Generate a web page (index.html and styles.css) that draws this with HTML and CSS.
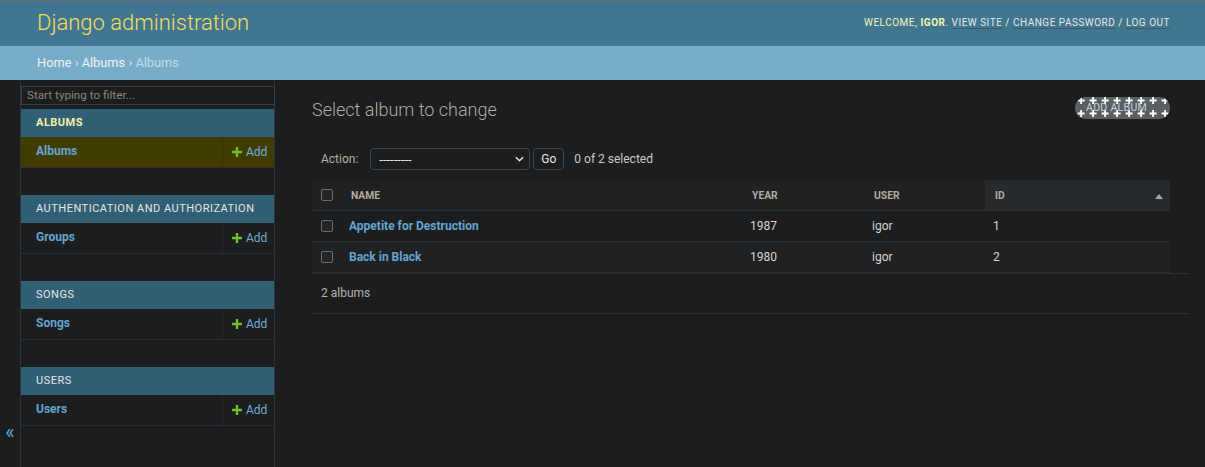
FILE: index.html
```html
<!DOCTYPE html>
<html lang="en">
<head>
<meta charset="utf-8">
<title>Select album to change | Django site admin</title>
<link rel="stylesheet" href="styles.css">
</head>
<body>
<div class="header">
  <div class="branding">Django administration</div>
  <div class="user-tools">WELCOME, <strong>IGOR</strong>. <a href="#">VIEW SITE</a> / <a href="#">CHANGE PASSWORD</a> / <a href="#">LOG OUT</a></div>
</div>
<div class="breadcrumbs"><a href="#">Home</a> <span class="sep">›</span> <a href="#">Albums</a> <span class="sep">›</span> <span class="last">Albums</span></div>
<div class="main">
  <div class="toggle"><span class="toggle-glyph">«</span></div>
  <nav class="sidebar">
    <div class="filter">Start typing to filter...</div>
    <div class="module current">
      <div class="caption">Albums</div>
      <div class="model-row"><a class="model" href="#">Albums</a><a class="add" href="#"><svg class="plus" viewBox="0 0 10 10"><path d="M3.8 0h2.4v3.8H10v2.4H6.2V10H3.8V6.2H0V3.8h3.8z"/></svg>Add</a></div>
    </div>
    <div class="module">
      <div class="caption">Authentication and Authorization</div>
      <div class="model-row"><a class="model" href="#">Groups</a><a class="add" href="#"><svg class="plus" viewBox="0 0 10 10"><path d="M3.8 0h2.4v3.8H10v2.4H6.2V10H3.8V6.2H0V3.8h3.8z"/></svg>Add</a></div>
    </div>
    <div class="module">
      <div class="caption">Songs</div>
      <div class="model-row"><a class="model" href="#">Songs</a><a class="add" href="#"><svg class="plus" viewBox="0 0 10 10"><path d="M3.8 0h2.4v3.8H10v2.4H6.2V10H3.8V6.2H0V3.8h3.8z"/></svg>Add</a></div>
    </div>
    <div class="module">
      <div class="caption">Users</div>
      <div class="model-row"><a class="model" href="#">Users</a><a class="add" href="#"><svg class="plus" viewBox="0 0 10 10"><path d="M3.8 0h2.4v3.8H10v2.4H6.2V10H3.8V6.2H0V3.8h3.8z"/></svg>Add</a></div>
    </div>
  </nav>
  <div class="content">
    <div class="content-head">
      <h1>Select album to change</h1>
      <a class="addlink" href="#">
        <svg class="addlink-bg" width="95" height="22"><defs><pattern id="pl" x="0" y="-3" width="12" height="13" patternUnits="userSpaceOnUse"><path d="M5.2 3h1.8v2.6h2.6v1.8H7V10H5.2V7.4H2.6V5.6h2.6z" fill="#ffffff"/></pattern></defs><rect width="95" height="22" fill="url(#pl)"/></svg>
        <span class="addlink-text">ADD ALBUM</span>
      </a>
    </div>
    <div class="actions">
      <span class="action-label">Action:</span>
      <div class="select"><span>---------</span><svg class="chev" viewBox="0 0 10 6"><path d="M1 1l4 4 4-4" fill="none" stroke="#e8e6e3" stroke-width="1.6"/></svg></div>
      <div class="go">Go</div>
      <span class="counter">0 of 2 selected</span>
    </div>
    <table class="results">
      <colgroup><col class="c-check"><col class="c-name"><col class="c-year"><col class="c-user"><col class="c-id"></colgroup>
      <thead>
        <tr><th class="check"><span class="cb"></span></th><th>Name</th><th>Year</th><th>User</th><th class="sorted">Id<span class="sort-arrow"></span></th></tr>
      </thead>
      <tbody>
        <tr class="row1"><td class="check"><span class="cb"></span></td><th class="name"><a href="#">Appetite for Destruction</a></th><td>1987</td><td>igor</td><td>1</td></tr>
        <tr class="row2"><td class="check"><span class="cb"></span></td><th class="name"><a href="#">Back in Black</a></th><td>1980</td><td>igor</td><td>2</td></tr>
      </tbody>
    </table>
    <div class="paginator">2 albums</div>
  </div>
</div>
</body>
</html>
```
FILE: styles.css
```css
* { box-sizing: border-box; }
html, body { margin: 0; padding: 0; }
body {
  background: #1b1d1e;
  font-family: Roboto, "Liberation Sans", sans-serif;
  font-size: 12px;
  color: #d8d4cf;
}
a { text-decoration: none; }

.header {
  display: flex;
  justify-content: space-between;
  align-items: flex-start;
  height: 46px;
  border-top: 1px solid #6e6e6e;
  background: #417690;
  padding: 0 35px 0 37px;
}
.branding {
  margin-top: 8px;
  font-size: 22px;
  line-height: 28px;
  font-weight: 300;
  color: #f5dd5d;
}
.user-tools {
  margin-top: 15px;
  font-size: 10px;
  line-height: 14px;
  letter-spacing: 0.5px;
  color: #f6f5b4;
}
.user-tools strong { font-weight: 700; }
.user-tools a {
  color: #e8e6e3;
  border-bottom: 1px solid #3d5b6b;
}

.breadcrumbs {
  height: 34px;
  background: #77adc8;
  padding: 9px 37px 0;
  font-size: 12.8px;
  line-height: 16px;
  color: #e6eef3;
}
.breadcrumbs a { color: #f2f2f2; }
.breadcrumbs .sep { color: #dbe9f1; }
.breadcrumbs .last { color: #c4dce8; }

.main {
  display: flex;
  min-height: 387px;
}
.toggle {
  flex: 0 0 21px;
  border-right: 1px solid #303335;
  padding-top: 342px;
  text-align: center;
}
.toggle-glyph {
  font-size: 20px;
  line-height: 20px;
  color: #5ea5d6;
}
.sidebar {
  flex: 0 0 254px;
  border-right: 1px solid #303335;
  padding-top: 6px;
}
.filter {
  height: 19px;
  border: 1px solid #3b3f42;
  margin-right: -1px;
  padding: 0 5px;
  font-size: 11.7px;
  line-height: 17px;
  color: #8a857e;
}
.module { margin-bottom: 27px; }
.filter + .module { margin-top: 4px; }
.caption {
  height: 28px;
  background: #305f76;
  padding: 8px 15px;
  font-size: 11px;
  line-height: 12px;
  letter-spacing: 0.5px;
  text-transform: uppercase;
  color: #e8e6e3;
}
.current .caption { color: #f5f3a2; font-weight: 700; }
.model-row {
  display: flex;
  height: 31px;
  border-bottom: 1px solid #2b2e30;
}
.current .model-row { background: #403c00; }
.model {
  flex: 1;
  padding: 6px 15px;
  line-height: 16px;
  font-weight: 700;
  color: #64a5d2;
}
.add {
  flex: 0 0 52px;
  display: flex;
  align-items: center;
  border-left: 1px solid #25272a;
  padding-left: 9px;
  color: #71acd6;
}
.current .add { border-left-color: #332f00; }
.plus { width: 10px; height: 10px; margin-right: 4px; fill: #71bd2c; }

.content {
  flex: 1;
  padding: 17px 35px 0 37px;
}
.content-head {
  display: flex;
  justify-content: space-between;
  align-items: flex-start;
}
h1 {
  margin: 2px 0 0;
  font-size: 18px;
  line-height: 22px;
  font-weight: 300;
  color: #b3aca1;
}
.addlink {
  position: relative;
  display: block;
  width: 95px;
  height: 22px;
  border-radius: 11px;
  overflow: hidden;
  background: #596064;
}
.addlink-bg { position: absolute; left: 0; top: 0; }
.addlink-text {
  position: relative;
  display: block;
  padding-left: 11px;
  font-size: 10.5px;
  line-height: 22px;
  letter-spacing: 0.3px;
  color: #c4d2da;
}

.actions {
  display: flex;
  align-items: center;
  height: 22px;
  margin-top: 27px;
  padding-left: 9px;
}
.action-label { color: #b7afa3; margin-right: 12px; }
.select {
  width: 160px;
  height: 22px;
  border: 1px solid #3f4447;
  border-radius: 4px;
  padding: 0 5px 0 8px;
  display: flex;
  align-items: center;
  justify-content: space-between;
  color: #e8e6e3;
  font-size: 13px;
}
.chev { width: 9px; height: 6px; }
.go {
  width: 31px;
  height: 22px;
  margin-left: 3px;
  border: 1px solid #3f4447;
  border-radius: 4px;
  text-align: center;
  line-height: 21px;
  color: #e8e6e3;
}
.counter { margin-left: 10px; color: #cfcac3; }

.results {
  margin-top: 10px;
  width: 858px;
  border-collapse: separate;
  border-spacing: 0;
  table-layout: fixed;
}
.c-check { width: 29px; }
.c-name { width: 401px; }
.c-year { width: 122px; }
.c-user { width: 121px; }
.c-id { width: 185px; }
.results thead th {
  height: 31px;
  background: #1f2123;
  border-bottom: 1px solid #313436;
  padding: 0 10px;
  font-size: 10.3px;
  font-weight: 700;
  text-transform: uppercase;
  text-align: left;
  color: #b3ab9f;
  vertical-align: middle;
}
.results thead th.sorted { background: #262a2c; position: relative; }
.sort-arrow {
  position: absolute;
  right: 7px;
  top: 14px;
  width: 0;
  height: 0;
  border-left: 4px solid transparent;
  border-right: 4px solid transparent;
  border-bottom: 5px solid #a7a7a7;
}
.results th.check, .results td.check { padding: 0 0 0 9px; }
.cb {
  display: block;
  width: 12px;
  height: 12px;
  border: 1px solid #6b6e70;
  border-radius: 2px;
  background: #222527;
}
.results tbody td, .results tbody th {
  height: 31px;
  border-bottom: 1px solid #2c2f31;
  padding: 0 8px;
  line-height: 16px;
  text-align: left;
  vertical-align: middle;
  color: #d8d4cf;
  font-weight: 400;
}
.results tbody th.name a { font-weight: 700; color: #64a5d2; }
.row2 { background: #1f2123; }

.paginator {
  margin-right: -19px;
  border-top: 1px solid #2c2f31;
  border-bottom: 1px solid #2c2f31;
  padding: 11px 0 12px 9px;
  line-height: 16px;
  color: #b9b2a8;
}
```
